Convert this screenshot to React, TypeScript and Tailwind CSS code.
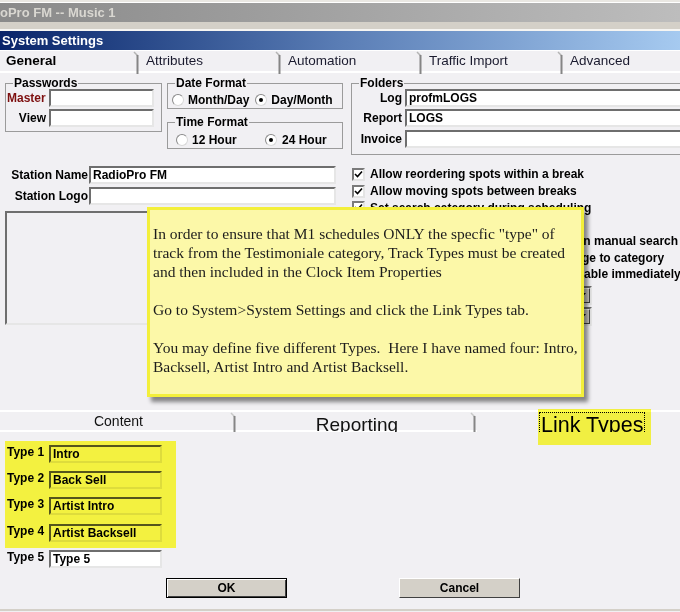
import React from "react"

const ui = "font-['Liberation_Sans',Arial,sans-serif]"

function Field({ value = "", className = "" }: { value?: string; className?: string }) {
  return (
    <div
      className={`h-[18px] shrink-0 border-2 border-t-[#6e6e6e] border-l-[#6e6e6e] border-r-[#e6e6e6] border-b-[#e6e6e6] bg-white px-[2px] text-[12px] font-bold leading-[14px] text-black whitespace-nowrap overflow-hidden ${className}`}
    >
      {value}
    </div>
  )
}

function HiField({ value }: { value: string }) {
  return (
    <div className="h-[18px] w-[113px] shrink-0 border-2 border-t-[#55551c] border-l-[#55551c] border-r-[#dedc3c] border-b-[#dedc3c] px-[2px] text-[12px] font-bold leading-[14px] text-black whitespace-nowrap overflow-hidden">
      {value}
    </div>
  )
}

function Radio({ checked }: { checked?: boolean }) {
  return (
    <span className="flex h-[12px] w-[12px] shrink-0 items-center justify-center rounded-full border border-t-[#8a8a8a] border-l-[#8a8a8a] border-r-[#d8d8d8] border-b-[#d8d8d8] bg-white">
      {checked && <span className="h-[4px] w-[4px] rounded-full bg-black" />}
    </span>
  )
}

function Check() {
  return (
    <span className="flex h-[13px] w-[13px] shrink-0 items-center justify-center border-2 border-t-[#7a7a7a] border-l-[#7a7a7a] border-r-[#e4e4e4] border-b-[#e4e4e4] bg-white">
      <svg width="9" height="9" viewBox="0 0 9 9">
        <path d="M1 4 L3.5 6.5 L8 1.5" stroke="#000" strokeWidth="1.6" fill="none" />
      </svg>
    </span>
  )
}

function Group({ title, className = "", children }: { title: string; className?: string; children: React.ReactNode }) {
  return (
    <fieldset className={`shrink-0 border border-[#9b9b9b] ${className}`}>
      <legend className="ml-[7px] px-[1px] text-[12px] font-bold leading-[12px]">{title}</legend>
      {children}
    </fieldset>
  )
}

function TabHook({ light }: { light?: boolean }) {
  return (
    <svg className="absolute right-0 top-0" width="7" height="23" viewBox="0 0 7 23">
      <path d="M1 1 L4.5 4.5" stroke={light ? "#c8c8c8" : "#b4b4b4"} strokeWidth="1.5" fill="none" />
      <path d="M4.5 4 V23" stroke="#858585" strokeWidth="2" fill="none" />
    </svg>
  )
}

const topTabs = [
  { label: "General", width: "w-[140px]", strong: true },
  { label: "Attributes", width: "w-[142px]" },
  { label: "Automation", width: "w-[141px]" },
  { label: "Traffic Import", width: "w-[141px]" },
  { label: "Advanced", width: "flex-1" },
]

const checks = [
  "Allow reordering spots within a break",
  "Allow moving spots between breaks",
  "Set search category during scheduling",
  "Show warnings during scheduling",
  "Show all song history and attributes in manual search",
  "Reset rotation when song has a change to category",
  "Make any newly imported songs available immediately",
]

const linkTypes = [
  { label: "Type 1", value: "Intro", mt: "" },
  { label: "Type 2", value: "Back Sell", mt: "mt-[8px]" },
  { label: "Type 3", value: "Artist Intro", mt: "mt-[8px]" },
  { label: "Type 4", value: "Artist Backsell", mt: "mt-[9px]" },
]

export default function App() {
  return (
    <div className={`relative h-[612px] w-[680px] overflow-hidden bg-[#f1f0f3] text-black ${ui}`}>
      {/* window chrome */}
      <div className="h-[3px] border-b border-white bg-[#e9e7e2]" />
      <div className="flex h-[19px] items-center bg-gradient-to-r from-[#8a8a8a] to-[#bdbdbd] text-[13px] font-bold text-[#d9d7d1]">
        oPro FM -- Music 1
      </div>
      <div className="h-[7px] bg-[#d4d0c8]" />
      <div className="h-[2px] bg-[#f6f5f2]" />
      <div className="flex h-[19px] items-center bg-gradient-to-r from-[#0a246a] via-[#5a7db5] to-[#a6caf0] pl-[2px] text-[13px] font-bold text-white">
        System Settings
      </div>

      {/* top tabs */}
      <div className="flex h-[23px] border-t border-white border-b-2 border-b-white bg-[#f1f0f3]">
        {topTabs.map((t, i) => (
          <div key={t.label} className={`relative ${t.width} flex items-center pl-[6px] text-[13.5px] ${t.strong ? "font-bold pl-[5px]" : "text-[#1a1a2e]"}`}>
            {t.label}
            {i < topTabs.length - 1 && <TabHook />}
          </div>
        ))}
      </div>

      {/* general tab */}
      <div className="h-[337px] pl-[5px] pt-[4px]">
        <div className="flex items-start">
          <Group title="Passwords" className="w-[157px] pb-[4px]">
            <div className="flex items-center">
              <div className="w-[43px] overflow-hidden whitespace-nowrap pl-[1px] text-[12px] font-bold text-[#7d0f0f]">Master</div>
              <Field className="w-[105px]" />
            </div>
            <div className="mt-[2px] flex items-center">
              <div className="w-[41px] pr-[1px] text-right text-[12px] font-bold">View</div>
              <Field className="ml-[2px] w-[105px]" />
            </div>
          </Group>

          <div className="ml-[5px] flex w-[176px] shrink-0 flex-col">
            <Group title="Date Format" className="h-[32px]">
              <div className="mt-[2px] flex items-center pl-[4px] text-[12px] font-bold">
                <Radio />
                <span className="ml-[4px]">Month/Day</span>
                <span className="ml-[6px]">
                  <Radio checked />
                </span>
                <span className="ml-[4px]">Day/Month</span>
              </div>
            </Group>
            <Group title="Time Format" className="mt-[7px] h-[33px]">
              <div className="mt-[3px] flex items-center pl-[8px] text-[12px] font-bold">
                <Radio />
                <span className="ml-[4px] w-[73px]">12 Hour</span>
                <Radio checked />
                <span className="ml-[5px]">24 Hour</span>
              </div>
            </Group>
          </div>

          <Group title="Folders" className="ml-[8px] w-[345px] pb-[6px]">
            {[
              ["Log", "profmLOGS"],
              ["Report", "LOGS"],
              ["Invoice", ""],
            ].map(([l, v], i) => (
              <div key={l} className={`flex items-center ${i === 0 ? "" : i === 1 ? "mt-[2px]" : "mt-[3px]"}`}>
                <div className="w-[51px] pr-[1px] text-right text-[12px] font-bold">{l}</div>
                <Field value={v} className="ml-[2px] w-[290px]" />
              </div>
            ))}
          </Group>
        </div>

        <div className="mt-[11px] flex items-start">
          <div className="w-[331px] shrink-0">
            <div className="flex items-center">
              <div className="w-[83px] text-right text-[12px] font-bold">Station Name</div>
              <Field value="RadioPro FM" className="ml-[1px] w-[247px]" />
            </div>
            <div className="mt-[3px] flex items-center">
              <div className="w-[83px] text-right text-[12px] font-bold">Station Logo</div>
              <Field className="ml-[1px] w-[247px]" />
            </div>
            <div className="mt-[6px] h-[114px] border-2 border-t-[#6e6e6e] border-l-[#6e6e6e] border-r-[#e6e6e6] border-b-[#e6e6e6]" />
          </div>

          <div className="ml-[16px] flex-1">
            {checks.map((c) => (
              <div key={c} className="flex h-[16.7px] items-center whitespace-nowrap text-[12px] font-bold">
                <Check />
                <span className="ml-[5px]">{c}</span>
              </div>
            ))}
            {["Default music category", "Default spot category"].map((l, i) => (
              <div key={l} className={`flex items-center ${i === 0 ? "mt-[3px]" : "mt-[2px]"}`}>
                <span className="w-[126px] whitespace-nowrap text-[12px] font-bold">{l}</span>
                <div className="flex h-[19px] w-[114px] border-2 border-t-[#6e6e6e] border-l-[#6e6e6e] border-r-[#e6e6e6] border-b-[#e6e6e6] bg-white">
                  <div className="flex-1" />
                  <div className="flex w-[15px] items-center justify-center border border-t-white border-l-white border-r-[#404040] border-b-[#404040] bg-[#d4d0c8]">
                    <svg width="7" height="4" viewBox="0 0 7 4">
                      <path d="M0 0 H7 L3.5 4 Z" fill="#000" />
                    </svg>
                  </div>
                </div>
              </div>
            ))}
          </div>
        </div>
      </div>

      {/* lower tabs */}
      <div className="flex h-[22px] overflow-hidden border-t-2 border-white">
        <div className="relative flex w-[237px] justify-center border-b-2 border-white pt-[1px] text-[14px] leading-[16px] text-[#111]">
          Content
          <TabHook light />
        </div>
        <div className="relative flex w-[240px] justify-center border-b-2 border-white pt-[2px] text-[19px] leading-[22px] text-[#111]">
          Reporting
          <TabHook light />
        </div>
        <div className="flex flex-1 justify-start pl-[62px]">
          <span className="h-[22px] border border-dotted border-black px-[1px] text-[21.5px] leading-[24px]">Link Types</span>
        </div>
      </div>
      <div className="pointer-events-none absolute left-[538px] top-[409px] h-[36px] w-[113px] bg-[#fffe45] mix-blend-multiply" />

      {/* link types */}
      <div className="ml-[5px] mt-[9px] w-[171px] bg-[#f3f140] pb-[6px] pt-[4px]">
        {linkTypes.map((t) => (
          <div key={t.label} className={`flex items-start ${t.mt}`}>
            <div className="w-[44px] pl-[2px] text-[12px] font-bold leading-[14px]">{t.label}</div>
            <HiField value={t.value} />
          </div>
        ))}
      </div>
      <div className="ml-[5px] mt-[2px] flex items-start">
        <div className="w-[44px] pl-[2px] text-[12px] font-bold leading-[14px]">Type 5</div>
        <Field value="Type 5" className="w-[113px]" />
      </div>

      <div className="mt-[10px] flex">
        <button className="ml-[166px] h-[20px] w-[121px] border border-black bg-[#d4d0c8] text-[12px] font-bold shadow-[inset_1px_1px_0_#fff,inset_-1px_-1px_0_#404040]">
          OK
        </button>
        <button className="ml-[112px] h-[20px] w-[121px] border border-t-white border-l-white border-r-[#404040] border-b-[#404040] bg-[#d4d0c8] text-[12px] font-bold">
          Cancel
        </button>
      </div>
      <div className="mt-[11px] h-[2px] bg-[#d4d0c8]" />

      {/* note */}
      <div className="absolute left-[147px] top-[207px] h-[190px] w-[437px] border-[3px] border-[#f3ef3a] bg-[#fcf8a8] pl-[3px] pt-[14px] font-['Liberation_Serif','Times_New_Roman',serif] text-[15.5px] leading-[19px] text-[#1c1c1c] shadow-[4px_5px_4px_rgba(0,0,0,0.45)] whitespace-pre">
        <div>In order to ensure that M1 schedules ONLY the specfic "type" of</div>
        <div>track from the Testimoniale category, Track Types must be created</div>
        <div>and then included in the Clock Item Properties</div>
        <div>&nbsp;</div>
        <div>Go to System&gt;System Settings and click the Link Types tab.</div>
        <div>&nbsp;</div>
        <div>You may define five different Types.  Here I have named four: Intro,</div>
        <div>Backsell, Artist Intro and Artist Backsell.</div>
      </div>
    </div>
  )
}
